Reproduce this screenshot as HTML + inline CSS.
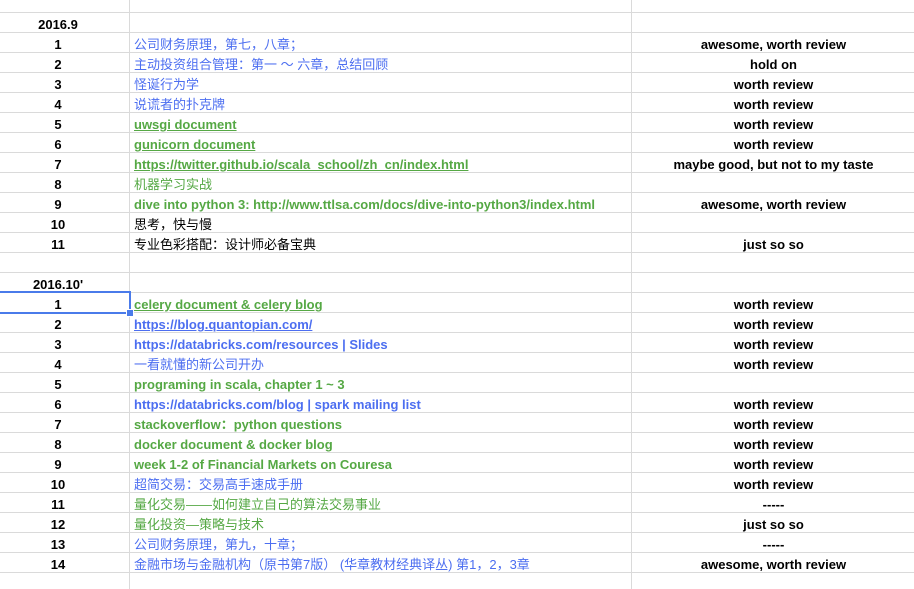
<!DOCTYPE html>
<html><head><meta charset="utf-8"><style>
body{margin:0;width:914px;height:589px;overflow:hidden;background:#fff;font-family:"Liberation Sans","Noto Sans CJK SC",sans-serif;font-size:13px;font-weight:bold;position:relative}
.h{position:absolute;left:0;width:914px;height:1px;background:#dadada}
.v{position:absolute;top:0;height:589px;width:1px;background:#dadada}
.r{position:absolute;left:0;width:914px;height:20px;line-height:22px;white-space:nowrap;transform:translateY(1px)}
.a{position:absolute;left:0;width:116px;text-align:center;color:#000}
.b{position:absolute;left:134px}
.c{position:absolute;left:633px;width:281px;text-align:center;color:#000}
.bl{color:#4c6ef0}.gr{color:#55a844}.bk{color:#000}
.u{text-decoration:underline}
.n{font-weight:normal}
</style></head><body>
<div class="v" style="left:129px"></div>
<div class="v" style="left:631px"></div>
<div class="h" style="top:12px"></div><div class="h" style="top:32px"></div><div class="h" style="top:52px"></div><div class="h" style="top:72px"></div><div class="h" style="top:92px"></div><div class="h" style="top:112px"></div><div class="h" style="top:132px"></div><div class="h" style="top:152px"></div><div class="h" style="top:172px"></div><div class="h" style="top:192px"></div><div class="h" style="top:212px"></div><div class="h" style="top:232px"></div><div class="h" style="top:252px"></div><div class="h" style="top:272px"></div><div class="h" style="top:292px"></div><div class="h" style="top:312px"></div><div class="h" style="top:332px"></div><div class="h" style="top:352px"></div><div class="h" style="top:372px"></div><div class="h" style="top:392px"></div><div class="h" style="top:412px"></div><div class="h" style="top:432px"></div><div class="h" style="top:452px"></div><div class="h" style="top:472px"></div><div class="h" style="top:492px"></div><div class="h" style="top:512px"></div><div class="h" style="top:532px"></div><div class="h" style="top:552px"></div><div class="h" style="top:572px"></div>

<div class="r" style="top:13px"><span class="a">2016.9</span></div>
<div class="r" style="top:33px"><span class="a">1</span><span class="b bl n">公司财务原理，第七，八章；</span><span class="c">awesome, worth review</span></div>
<div class="r" style="top:53px"><span class="a">2</span><span class="b bl n">主动投资组合管理：第一 ～ 六章，总结回顾</span><span class="c">hold on</span></div>
<div class="r" style="top:73px"><span class="a">3</span><span class="b bl n">怪诞行为学</span><span class="c">worth review</span></div>
<div class="r" style="top:93px"><span class="a">4</span><span class="b bl n">说谎者的扑克牌</span><span class="c">worth review</span></div>
<div class="r" style="top:113px"><span class="a">5</span><span class="b gr u">uwsgi document</span><span class="c">worth review</span></div>
<div class="r" style="top:133px"><span class="a">6</span><span class="b gr u">gunicorn document</span><span class="c">worth review</span></div>
<div class="r" style="top:153px"><span class="a">7</span><span class="b gr u">https://twitter.github.io/scala_school/zh_cn/index.html</span><span class="c">maybe good, but not to my taste</span></div>
<div class="r" style="top:173px"><span class="a">8</span><span class="b gr n">机器学习实战</span></div>
<div class="r" style="top:193px"><span class="a">9</span><span class="b gr">dive into python 3: http://www.ttlsa.com/docs/dive-into-python3/index.html</span><span class="c">awesome, worth review</span></div>
<div class="r" style="top:213px"><span class="a">10</span><span class="b bk n">思考，快与慢</span></div>
<div class="r" style="top:233px"><span class="a">11</span><span class="b bk n">专业色彩搭配：设计师必备宝典</span><span class="c">just so so</span></div>

<div class="r" style="top:273px"><span class="a">2016.10'</span></div>
<div class="r" style="top:293px"><span class="a">1</span><span class="b gr u">celery document &amp; celery blog</span><span class="c">worth review</span></div>
<div class="r" style="top:313px"><span class="a">2</span><span class="b bl u">https://blog.quantopian.com/</span><span class="c">worth review</span></div>
<div class="r" style="top:333px"><span class="a">3</span><span class="b bl">https://databricks.com/resources | Slides</span><span class="c">worth review</span></div>
<div class="r" style="top:353px"><span class="a">4</span><span class="b bl n">一看就懂的新公司开办</span><span class="c">worth review</span></div>
<div class="r" style="top:373px"><span class="a">5</span><span class="b gr">programing in scala, chapter 1 ~ 3</span></div>
<div class="r" style="top:393px"><span class="a">6</span><span class="b bl">https://databricks.com/blog | spark mailing list</span><span class="c">worth review</span></div>
<div class="r" style="top:413px"><span class="a">7</span><span class="b gr">stackoverflow：python questions</span><span class="c">worth review</span></div>
<div class="r" style="top:433px"><span class="a">8</span><span class="b gr">docker document &amp; docker blog</span><span class="c">worth review</span></div>
<div class="r" style="top:453px"><span class="a">9</span><span class="b gr">week 1-2 of Financial Markets on Couresa</span><span class="c">worth review</span></div>
<div class="r" style="top:473px"><span class="a">10</span><span class="b bl n">超简交易：交易高手速成手册</span><span class="c">worth review</span></div>
<div class="r" style="top:493px"><span class="a">11</span><span class="b gr n">量化交易——如何建立自己的算法交易事业</span><span class="c">-----</span></div>
<div class="r" style="top:513px"><span class="a">12</span><span class="b gr n">量化投资—策略与技术</span><span class="c">just so so</span></div>
<div class="r" style="top:533px"><span class="a">13</span><span class="b bl n">公司财务原理，第九，十章；</span><span class="c">-----</span></div>
<div class="r" style="top:553px"><span class="a">14</span><span class="b bl n">金融市场与金融机构（原书第7版） (华章教材经典译丛) 第1，2，3章</span><span class="c">awesome, worth review</span></div>

<div style="position:absolute;left:-2px;top:291px;width:129px;height:19px;border:2px solid #4a7bea"></div>
<div style="position:absolute;left:126px;top:309px;width:6px;height:6px;background:#4a7bea;border:1px solid #fff"></div>
</body></html>
